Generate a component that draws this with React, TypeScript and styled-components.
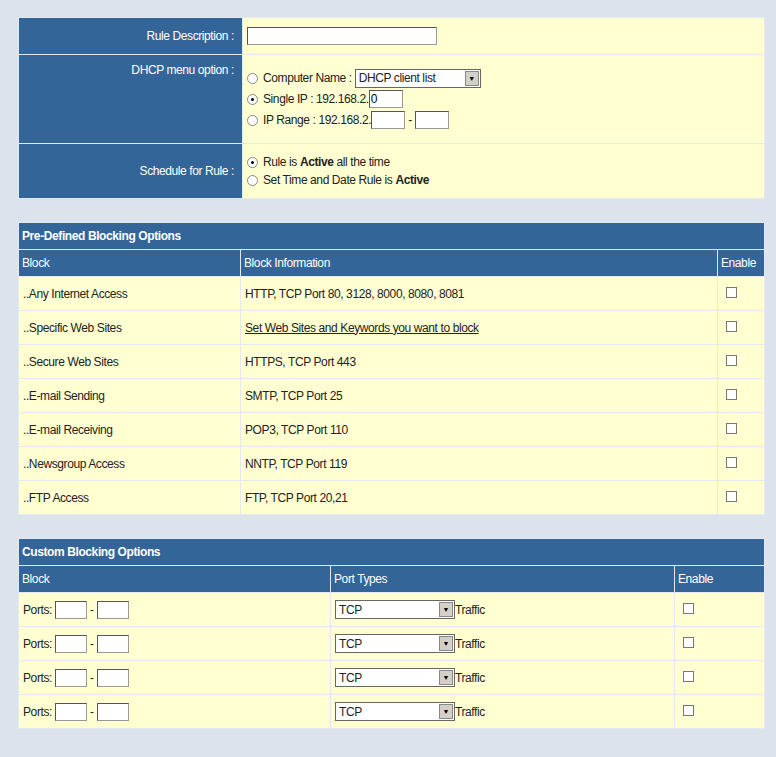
import React from "react";
import styled, { createGlobalStyle } from "styled-components";

const Global = createGlobalStyle`
  html, body { margin: 0; padding: 0; background: #dce3ec; }
  body { font-family: "Liberation Sans Narrow", "Liberation Sans", Arial, sans-serif; font-size: 12px; color: #222; letter-spacing: -0.4px; }
`;

const Page = styled.div`
  padding: 17px 11px 20px 18px;
  display: flex; flex-direction: column; gap: 23px;
`;

const Table = styled.table`
  width: 747px; border-collapse: collapse; table-layout: fixed;
  td, th { border: 1px solid #e4e9ef; }
`;

const Label = styled.td<{ h: number; top?: boolean }>`
  background: #336599; color: #fff; text-align: right; padding: 0 8px;
  height: ${p => (p.top ? p.h - 8 : p.h)}px; vertical-align: ${p => (p.top ? "top" : "middle")};
  padding-top: ${p => (p.top ? "8px" : "0")};
`;

const Cell = styled.td<{ h?: number }>`
  background: #ffffd2; padding: 0 4px; height: ${p => p.h ?? 33}px; vertical-align: middle;
`;

const Title = styled.th`
  background: #336599; color: #fff; text-align: left; font-weight: bold; height: 26px; padding: 0 3px;
`;

const Head = styled.td`
  background: #336599; color: #fff; height: 26px; padding: 0 3px;
`;

const Line = styled.div`
  display: flex; align-items: center; gap: 3px; height: 21px;
`;

const Input = styled.input<{ w: number }>`
  width: ${p => p.w}px; height: 18px; box-sizing: border-box; border: 1px solid #999; border-top-color: #555; border-left-color: #555;
  font: inherit; padding: 0 1px; background: #fff;
`;

const FakeSelect = styled.div<{ w: number }>`
  width: ${p => p.w}px; height: 19px; box-sizing: border-box; border: 1px solid #666; background: #fff;
  display: flex; align-items: center; justify-content: space-between; padding-left: 3px;
`;

const Arrow = styled.span`
  width: 14px; height: 15px; background: #d4d0c8; border: 1px solid #888; box-sizing: border-box; margin-right: 1px;
  display: flex; align-items: center; justify-content: center; font-size: 7px; color: #000; letter-spacing: 0;
`;

const Radio = styled.span<{ on?: boolean }>`
  width: 9px; height: 9px; border-radius: 50%; border: 1px solid #888; background: #fff; display: inline-flex;
  align-items: center; justify-content: center; margin-right: 2px;
  &::after { content: ""; width: 3px; height: 3px; border-radius: 50%; background: ${p => (p.on ? "#000" : "transparent")}; }
`;

const Check = styled.span`
  display: inline-block; width: 9px; height: 9px; border: 1px solid #777; background: #fff;
`;

const Link = styled.a`
  color: #222; text-decoration: underline;
`;

const predefined = [
  ["..Any Internet Access", "HTTP, TCP Port 80, 3128, 8000, 8080, 8081"],
  ["..Specific Web Sites", "LINK"],
  ["..Secure Web Sites", "HTTPS, TCP Port 443"],
  ["..E-mail Sending", "SMTP, TCP Port 25"],
  ["..E-mail Receiving", "POP3, TCP Port 110"],
  ["..Newsgroup Access", "NNTP, TCP Port 119"],
  ["..FTP Access", "FTP, TCP Port 20,21"],
];

export default function App() {
  return (
    <>
      <Global />
      <Page>
        <Table>
          <colgroup><col style={{ width: 224 }} /><col /></colgroup>
          <tbody>
            <tr>
              <Label h={36}>Rule Description :</Label>
              <Cell h={36}><Input w={190} /></Cell>
            </tr>
            <tr>
              <Label h={88} top>DHCP menu option :</Label>
              <Cell h={88}>
                <Line><Radio />Computer Name :<FakeSelect w={126}>DHCP client list<Arrow>▼</Arrow></FakeSelect></Line>
                <Line><Radio on />Single IP : 192.168.2.<Input w={34} defaultValue="0" style={{ marginLeft: -3 }} /></Line>
                <Line><Radio />IP Range : 192.168.2.<Input w={34} style={{ marginLeft: -3 }} /> - <Input w={34} /></Line>
              </Cell>
            </tr>
            <tr>
              <Label h={54}>Schedule for Rule :</Label>
              <Cell h={54}>
                <Line style={{ height: 18 }}><Radio on />Rule is <b>Active</b> all the time</Line>
                <Line style={{ height: 18 }}><Radio />Set Time and Date Rule is <b>Active</b></Line>
              </Cell>
            </tr>
          </tbody>
        </Table>

        <Table>
          <colgroup><col style={{ width: 222 }} /><col /><col style={{ width: 47 }} /></colgroup>
          <thead><tr><Title colSpan={3}>Pre-Defined Blocking Options</Title></tr></thead>
          <tbody>
            <tr><Head>Block</Head><Head>Block Information</Head><Head>Enable</Head></tr>
            {predefined.map(([a, b]) => (
              <tr key={a}>
                <Cell>{a}</Cell>
                <Cell>{b === "LINK" ? <Link href="#">Set Web Sites and Keywords you want to block</Link> : b}</Cell>
                <Cell style={{ paddingLeft: 8 }}><Check /></Cell>
              </tr>
            ))}
          </tbody>
        </Table>

        <Table>
          <colgroup><col style={{ width: 312 }} /><col /><col style={{ width: 90 }} /></colgroup>
          <thead><tr><Title colSpan={3}>Custom Blocking Options</Title></tr></thead>
          <tbody>
            <tr><Head>Block</Head><Head>Port Types</Head><Head>Enable</Head></tr>
            {[0, 1, 2, 3].map(i => (
              <tr key={i}>
                <Cell><Line>Ports: <Input w={32} /> - <Input w={32} /></Line></Cell>
                <Cell><Line style={{ gap: 0 }}><FakeSelect w={120}>TCP<Arrow>▼</Arrow></FakeSelect>Traffic</Line></Cell>
                <Cell style={{ paddingLeft: 8 }}><Check /></Cell>
              </tr>
            ))}
          </tbody>
        </Table>
      </Page>
    </>
  );
}
